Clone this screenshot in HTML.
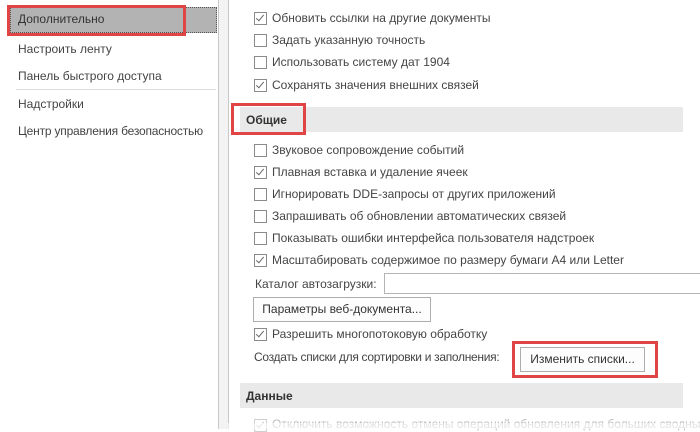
<!DOCTYPE html>
<html><head><meta charset="utf-8"><style>
body{margin:0;width:700px;height:429px;background:#fff;position:relative;overflow:hidden;font-family:"Liberation Sans",sans-serif;font-size:12px;color:#444}
.a{position:absolute;white-space:nowrap}
.cb{position:absolute;width:11px;height:11px;border:1px solid #8a8a8a;background:#fff}
.cb.c::after{content:"";position:absolute;left:3px;top:0px;width:3px;height:7px;border:solid #666;border-width:0 1.3px 1.3px 0;transform:rotate(40deg)}
.hdr{position:absolute;left:240px;width:443px;height:25px;background:#e9e9e9;font-weight:bold;color:#333}
.btn{position:absolute;border:1px solid #adadad;background:#fdfdfd;text-align:center;color:#333}
.red{position:absolute;border:3px solid #e04444;box-sizing:border-box}
</style></head><body>
<div class="a" style="left:10px;top:7px;width:207px;height:26px;background:#b3b3b3;border:1px dotted #555;box-sizing:border-box"></div>
<div class="a" style="left:18px;top:12px;color:#333">Дополнительно</div>
<div class="a" style="left:18px;top:42px">Настроить ленту</div>
<div class="a" style="left:18px;top:69px">Панель быстрого доступа</div>
<div class="a" style="left:16px;top:89px;width:200px;height:1px;background:#ddd"></div>
<div class="a" style="left:18px;top:97px">Надстройки</div>
<div class="a" style="left:18px;top:124px;letter-spacing:-0.2px">Центр управления безопасностью</div>
<div class="a" style="left:218px;top:0;width:9px;height:429px;background:#f3f3f3;border-left:1px solid #c8c8c8;border-right:1px solid #c8c8c8"></div>
<div class="red" style="left:7px;top:5px;width:179px;height:31px"></div>

<div class="cb c" style="left:254px;top:12px"></div><div class="a" style="left:272px;top:11px">Обновить ссылки на другие документы</div>
<div class="cb" style="left:254px;top:34px"></div><div class="a" style="left:272px;top:33px">Задать указанную точность</div>
<div class="cb" style="left:254px;top:56px"></div><div class="a" style="left:272px;top:55px">Использовать систему дат 1904</div>
<div class="cb c" style="left:254px;top:79px"></div><div class="a" style="left:272px;top:78px">Сохранять значения внешних связей</div>

<div class="hdr" style="top:107px"><span style="position:absolute;left:6px;top:6px">Общие</span></div>
<div class="red" style="left:231px;top:103px;width:75px;height:32px"></div>

<div class="cb" style="left:254px;top:144px"></div><div class="a" style="left:272px;top:143px">Звуковое сопровождение событий</div>
<div class="cb c" style="left:254px;top:166px"></div><div class="a" style="left:272px;top:165px">Плавная вставка и удаление ячеек</div>
<div class="cb" style="left:254px;top:188px"></div><div class="a" style="left:272px;top:187px">Игнорировать DDE-запросы от других приложений</div>
<div class="cb" style="left:254px;top:210px"></div><div class="a" style="left:272px;top:209px">Запрашивать об обновлении автоматических связей</div>
<div class="cb" style="left:254px;top:232px"></div><div class="a" style="left:272px;top:231px">Показывать ошибки интерфейса пользователя надстроек</div>
<div class="cb c" style="left:254px;top:254px"></div><div class="a" style="left:272px;top:253px">Масштабировать содержимое по размеру бумаги A4 или Letter</div>
<div class="a" style="left:255px;top:277px">Каталог автозагрузки:</div>
<div class="a" style="left:384px;top:273px;width:320px;height:21px;border:1px solid #b5b5b5;box-sizing:border-box"></div>
<div class="btn" style="left:253px;top:297px;width:176px;height:23px;line-height:22px">Параметры веб-документа...</div>
<div class="cb c" style="left:254px;top:328px"></div><div class="a" style="left:272px;top:327px">Разрешить многопотоковую обработку</div>
<div class="a" style="left:254px;top:350px;letter-spacing:-0.3px">Создать списки для сортировки и заполнения:</div>
<div class="btn" style="left:520px;top:347px;width:123px;height:23px;line-height:22px">Изменить списки...</div>
<div class="red" style="left:512px;top:341px;width:146px;height:37px"></div>

<div class="hdr" style="top:383px"><span style="position:absolute;left:6px;top:6px">Данные</span></div>
<div class="cb c" style="left:254px;top:419px;opacity:.4"></div><div class="a" style="left:272px;top:417px;color:#bbb">Отключить возможность отмены операций обновления для больших сводных</div>
<div class="a" style="left:228px;top:423px;width:472px;height:6px;background:#fff;opacity:.6"></div>
</body></html>
